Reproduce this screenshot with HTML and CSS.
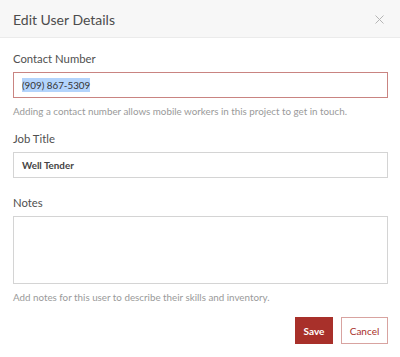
FILE: index.html
```html
<!DOCTYPE html>
<html lang="en">
<head>
    <meta charset="UTF-8">
    <meta name="viewport" content="width=device-width, initial-scale=1.0">
    <title>Edit User Details</title>
    <link rel="stylesheet" href="styles.css">
</head>
<body>
    <div class="modal">
        <div class="modal-header">
            <h2 class="modal-title">Edit User Details</h2>
            <span class="close-btn">
                <svg width="9" height="9" viewBox="0 0 9 9">
                    <path d="M0.5 0.5 L8.5 8.5 M8.5 0.5 L0.5 8.5" stroke="#b5b5b5" stroke-width="1" fill="none"/>
                </svg>
            </span>
        </div>

        <div class="modal-body">
            <div class="field">
                <label class="field-label">Contact Number</label>
                <div class="input input-error"><span class="selected">(909) 867-5309</span></div>
                <p class="field-help">Adding a contact number allows mobile workers in this project to get in touch.</p>
            </div>

            <div class="field">
                <label class="field-label">Job Title</label>
                <div class="input">Well Tender</div>
            </div>

            <div class="field field-notes">
                <label class="field-label">Notes</label>
                <div class="textarea"></div>
                <p class="field-help">Add notes for this user to describe their skills and inventory.</p>
            </div>

            <div class="actions">
                <button class="btn btn-primary">Save</button>
                <button class="btn btn-outline">Cancel</button>
            </div>
        </div>
    </div>
</body>
</html>
```

FILE: styles.css
```css
  body, html {
      margin: 0;
      padding: 0;
      background: #fff;
      font-family: Lato, "Noto Sans", sans-serif;
      color: #4a4a4a;
  }
  .modal {
      width: 400px;
      height: 357px;
  }
  .modal-header {
      display: flex;
      align-items: center;
      justify-content: space-between;
      height: 37px;
      padding: 0 16px 0 13px;
      background: #f7f7f7;
      border-bottom: 1px solid #ebebeb;
  }
  .modal-title {
      margin: 0;
      font-size: 14px;
      font-weight: normal;
      color: #4c4c4c;
      padding-top: 1px;
  }
  .close-btn {
      display: flex;
      padding-top: 2px;
  }
  .modal-body {
      padding: 14px 12px 0 13px;
  }
  .field {
      margin-bottom: 14px;
  }
  .field-notes {
      margin-top: 18px;
      margin-bottom: 13px;
  }
  .field-label {
      display: block;
      font-size: 11.3px;
      line-height: 14px;
      color: #505050;
      margin-bottom: 6px;
  }
  .input {
      box-sizing: border-box;
      height: 26px;
      border: 1px solid #d4d4d4;
      padding: 0 8px;
      display: flex;
      align-items: center;
      font-size: 9.8px;
      font-weight: bold;
      color: #444;
  }
  .input-error {
      border-color: #c98481;
      font-weight: normal;
      color: #333;
  }
  .selected {
      background: #b3d4fc;
      padding: 1px 0;
  }
  .textarea {
      box-sizing: border-box;
      height: 68px;
      border: 1px solid #d4d4d4;
  }
  .field-help {
      margin: 6px 0 0;
      font-size: 9.8px;
      line-height: 14px;
      color: #9a9a9a;
  }
  .actions {
      display: flex;
      justify-content: flex-end;
      gap: 8px;
  }
  .btn {
      box-sizing: border-box;
      height: 27px;
      font-family: inherit;
      font-size: 10px;
      font-weight: bold;
      cursor: pointer;
  }
  .btn-primary {
      width: 38px;
      background: #a8302a;
      border: 1px solid #a8302a;
      color: #fff;
  }
  .btn-outline {
      width: 47px;
      background: #fff;
      border: 1px solid #d8a3a0;
      color: #a8302a;
      font-weight: normal;
  }
```
